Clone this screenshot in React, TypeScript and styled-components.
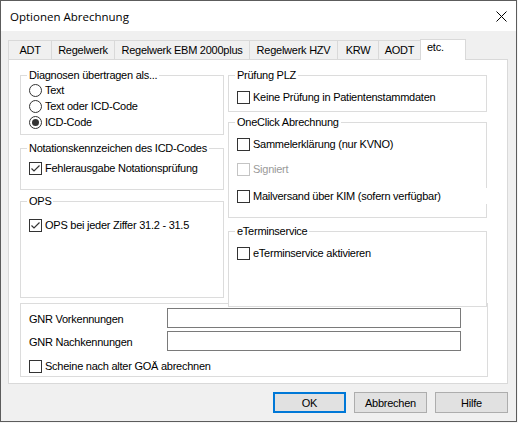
import React from "react";
import styled, { createGlobalStyle } from "styled-components";

const Global = createGlobalStyle`
  html, body { margin: 0; padding: 0; background: #f6f6f6; }
  body {
    width: 518px; height: 423px; overflow: hidden;
    font-family: "Liberation Sans", Arial, sans-serif;
    font-size: 11px; color: #000;
  }
`;

const Window = styled.div`
  box-sizing: border-box;
  width: 517px;
  height: 422px;
  border: 1px solid #5c5c5c;
  background: #f0f0f0;
  display: flex;
  flex-direction: column;
`;

const TitleBar = styled.div`
  height: 30px;
  flex: none;
  background: #fff;
  display: flex;
  align-items: center;
  justify-content: space-between;
  padding: 0 9px 0 9px;
`;

const TitleText = styled.span`
  font-family: "Segoe UI", "Open Sans", sans-serif;
  font-size: 11.5px;
  color: #000;
`;

const Body = styled.div`
  flex: 1;
  display: flex;
  flex-direction: column;
  padding: 8px 8px 0 7px;
`;

const TabStrip = styled.div`
  height: 20px;
  display: flex;
  align-items: flex-end;
`;

const Tab = styled.div<{ $w: number; $active?: boolean }>`
  box-sizing: border-box;
  position: relative;
  z-index: ${(p) => (p.$active ? 2 : 1)};
  width: ${(p) => p.$w}px;
  height: ${(p) => (p.$active ? 21 : 19)}px;
  margin-bottom: ${(p) => (p.$active ? -1 : 0)}px;
  margin-left: -1px;
  &:first-child { margin-left: 0; }
  border: 1px solid #d9d9d9;
  border-bottom: none;
  background: ${(p) => (p.$active ? "#fff" : "#f0f0f0")};
  text-align: ${(p) => (p.$active ? "left" : "center")};
  padding-left: ${(p) => (p.$active ? 6 : 0)}px;
  line-height: ${(p) => (p.$active ? 14 : 18)}px;
  letter-spacing: -0.25px;
  white-space: nowrap;
`;

const Panel = styled.div`
  box-sizing: border-box;
  width: 500px;
  height: 325px;
  border: 1px solid #d9d9d9;
  background: #fff;
  padding: 15px 0 6px 11px;
  display: flex;
  flex-direction: column;
`;

const Columns = styled.div`
  display: flex;
  align-items: flex-start;
  gap: 4px;
`;

const Column = styled.div<{ $w: number }>`
  width: ${(p) => p.$w}px;
  display: flex;
  flex-direction: column;
`;

const Group = styled.div<{ $h: number; $w?: number; $mt?: number; $pt: number; $over?: boolean }>`
  position: relative;
  z-index: ${(p) => (p.$over ? 1 : "auto")};
  box-sizing: border-box;
  height: ${(p) => p.$h}px;
  width: ${(p) => (p.$w ? `${p.$w}px` : "auto")};
  margin-top: ${(p) => p.$mt ?? 0}px;
  padding: ${(p) => p.$pt}px 0 0 8px;
  border: 1px solid #dcdcdc;
  background: #fff;
`;

const Legend = styled.span`
  position: absolute;
  top: -7px;
  left: 6px;
  padding: 0 2px;
  line-height: 13px;
  background: #fff;
  letter-spacing: -0.25px;
  white-space: nowrap;
`;

const Row = styled.div<{ $mt?: number; $w?: number; $disabled?: boolean }>`
  display: flex;
  align-items: center;
  gap: 3px;
  height: 16px;
  margin-top: ${(p) => p.$mt ?? 0}px;
  width: ${(p) => (p.$w ? `${p.$w}px` : "auto")};
  background: #fff;
  color: ${(p) => (p.$disabled ? "#9a9a9a" : "#000")};
  letter-spacing: -0.25px;
  white-space: nowrap;
`;

const Box = styled.span<{ $disabled?: boolean }>`
  box-sizing: border-box;
  flex: none;
  width: 13px;
  height: 13px;
  border: 1px solid ${(p) => (p.$disabled ? "#c4c4c4" : "#333")};
  background: #fff;
  display: flex;
  align-items: center;
  justify-content: center;
`;

const Circle = styled.span`
  box-sizing: border-box;
  flex: none;
  width: 13px;
  height: 13px;
  border-radius: 50%;
  border: 1px solid #333;
  background: #fff;
  display: flex;
  align-items: center;
  justify-content: center;
`;

const Dot = styled.span`
  width: 7px;
  height: 7px;
  border-radius: 50%;
  background: #333;
`;

const FieldRow = styled.div<{ $mt?: number }>`
  display: flex;
  height: 20px;
  margin-top: ${(p) => p.$mt ?? 0}px;
`;

const FieldLabel = styled.span`
  width: 138px;
  padding-top: 5px;
  line-height: 13px;
  letter-spacing: -0.25px;
`;

const Input = styled.div`
  box-sizing: border-box;
  width: 294px;
  height: 20px;
  border: 1px solid #7a7a7a;
  background: #fff;
`;

const ButtonRow = styled.div`
  display: flex;
  justify-content: flex-end;
  gap: 8px;
  margin-top: 8px;
  width: 500px;
`;

const Button = styled.div<{ $default?: boolean }>`
  box-sizing: border-box;
  width: 73px;
  height: 21px;
  background: #e1e1e1;
  border: ${(p) => (p.$default ? "2px solid #0078d7" : "1px solid #adadad")};
  display: flex;
  align-items: center;
  justify-content: center;
  letter-spacing: -0.25px;
`;

function Check({ label, checked, disabled, mt, w }: { label: string; checked?: boolean; disabled?: boolean; mt?: number; w?: number }) {
  return (
    <Row $mt={mt} $w={w} $disabled={disabled}>
      <Box $disabled={disabled}>
        {checked && (
          <svg width="11" height="11" viewBox="0 0 11 11">
            <path d="M1.5 5.5 L4 8 L9.5 2.5" fill="none" stroke="#333" strokeWidth="1.2" />
          </svg>
        )}
      </Box>
      <span>{label}</span>
    </Row>
  );
}

function Radio({ label, checked, mt }: { label: string; checked?: boolean; mt?: number }) {
  return (
    <Row $mt={mt}>
      <Circle>{checked && <Dot />}</Circle>
      <span>{label}</span>
    </Row>
  );
}

export default function App() {
  return (
    <>
      <Global />
      <Window>
        <TitleBar>
          <TitleText>Optionen Abrechnung</TitleText>
          <svg width="11" height="11" viewBox="0 0 11 11">
            <path d="M0.5 0.5 L10.5 10.5 M10.5 0.5 L0.5 10.5" stroke="#000" strokeWidth="1" />
          </svg>
        </TitleBar>
        <Body>
          <TabStrip>
            <Tab $w={44}>ADT</Tab>
            <Tab $w={64}>Regelwerk</Tab>
            <Tab $w={136}>Regelwerk EBM 2000plus</Tab>
            <Tab $w={89}>Regelwerk HZV</Tab>
            <Tab $w={42}>KRW</Tab>
            <Tab $w={43}>AODT</Tab>
            <Tab $w={46} $active>etc.</Tab>
          </TabStrip>
          <Panel>
            <Columns>
              <Column $w={204}>
                <Group $h={60} $pt={6}>
                  <Legend>Diagnosen übertragen als...</Legend>
                  <Radio label="Text" />
                  <Radio label="Text oder ICD-Code" />
                  <Radio label="ICD-Code" checked />
                </Group>
                <Group $h={42} $mt={13} $pt={11}>
                  <Legend>Notationskennzeichen des ICD-Codes</Legend>
                  <Check label="Fehlerausgabe Notationsprüfung" checked />
                </Group>
                <Group $h={97} $mt={11} $pt={15}>
                  <Legend>OPS</Legend>
                  <Check label="OPS bei jeder Ziffer 31.2 - 31.5" checked />
                </Group>
              </Column>
              <Column $w={259}>
                <Group $h={37} $pt={13} $over>
                  <Legend>Prüfung PLZ</Legend>
                  <Check label="Keine Prüfung in Patientenstammdaten" />
                </Group>
                <Group $h={96} $mt={10} $pt={13} $over>
                  <Legend>OneClick Abrechnung</Legend>
                  <Check label="Sammelerklärung (nur KVNO)" />
                  <Check label="Signiert" disabled mt={9} />
                  <Check label="Mailversand über KIM (sofern verfügbar)" mt={11} w={252} />
                </Group>
                <Group $h={76} $mt={13} $pt={13} $over>
                  <Legend>eTerminservice</Legend>
                  <Check label="eTerminservice aktivieren" />
                </Group>
              </Column>
            </Columns>
            <Group $h={74} $w={468} $mt={-4} $pt={4}>
              <FieldRow>
                <FieldLabel>GNR Vorkennungen</FieldLabel>
                <Input />
              </FieldRow>
              <FieldRow $mt={3}>
                <FieldLabel>GNR Nachkennungen</FieldLabel>
                <Input />
              </FieldRow>
              <Check label="Scheine nach alter GOÄ abrechnen" mt={7} />
            </Group>
          </Panel>
          <ButtonRow>
            <Button $default>OK</Button>
            <Button>Abbrechen</Button>
            <Button>Hilfe</Button>
          </ButtonRow>
        </Body>
      </Window>
    </>
  );
}
